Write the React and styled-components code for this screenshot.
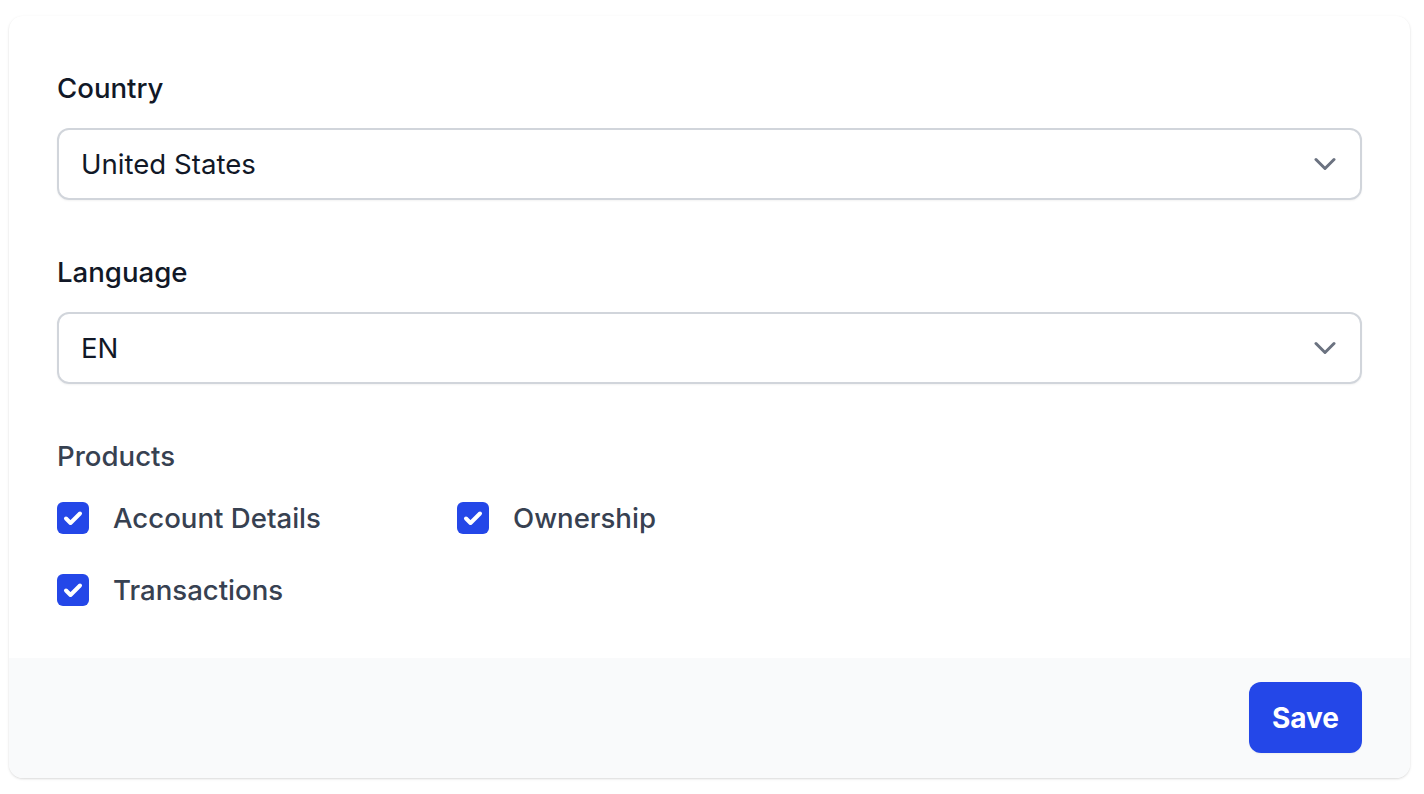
import styled, { createGlobalStyle } from 'styled-components';

const GlobalStyle = createGlobalStyle`
  html, body {
    margin: 0;
    padding: 0;
    background: #ffffff;
    font-family: Inter, "Noto Sans", "Liberation Sans", sans-serif;
    -webkit-font-smoothing: antialiased;
  }
  * { box-sizing: border-box; }
`;

const Page = styled.div`
  padding: 16px 14px 16px 9px;
`;

const Card = styled.form`
  background: #ffffff;
  border-radius: 14px;
  box-shadow: 0 1px 3px rgba(0, 0, 0, 0.1), 0 1px 2px rgba(0, 0, 0, 0.06);
  overflow: hidden;
`;

const Body = styled.div`
  padding: 48px 48px;
  display: flex;
  flex-direction: column;
  gap: 48px;
`;

const Field = styled.div`
  display: flex;
  flex-direction: column;
  gap: 16px;
`;

const Label = styled.label`
  font-size: 27.6px;
  line-height: 48px;
  font-weight: 500;
  color: ${p => (p.$muted ? '#374151' : '#111827')};
`;

const SelectBox = styled.div`
  position: relative;
  height: 72px;
  border: 2px solid #d1d5db;
  border-radius: 12px;
  box-shadow: 0 1px 2px rgba(0, 0, 0, 0.05);
  display: flex;
  align-items: center;
  padding: 0 22px;
  font-size: 27.6px;
  color: #111827;
`;

const Chevron = styled.svg`
  position: absolute;
  right: 24px;
  top: 50%;
  transform: translateY(-50%);
`;

const Options = styled.div`
  display: grid;
  grid-template-columns: repeat(2, 400px);
  row-gap: 32px;
  margin-top: 18px;
`;

const Option = styled.label`
  display: flex;
  align-items: center;
  gap: 24px;
  height: 40px;
  font-size: 27.6px;
  font-weight: 500;
  color: #374151;
`;

const Box = styled.span`
  width: 32px;
  height: 32px;
  border-radius: 6px;
  background: #2447e8;
  display: flex;
  align-items: center;
  justify-content: center;
`;

const Footer = styled.div`
  background: #f9fafb;
  padding: 24px 48px 25px;
  display: flex;
  justify-content: flex-end;
`;

const SaveButton = styled.button`
  border: none;
  background: #2447e8;
  color: #ffffff;
  font-family: inherit;
  font-size: 28px;
  font-weight: 700;
  line-height: 40px;
  padding: 16px 23px 15px;
  border-radius: 12px;
  box-shadow: 0 1px 2px rgba(0, 0, 0, 0.05);
  cursor: pointer;
`;

function Select({ value }) {
  return (
    <SelectBox>
      {value}
      <Chevron width="22" height="13" viewBox="0 0 22 13" fill="none">
        <path d="M2 2l9 9 9-9" stroke="#6b7280" strokeWidth="3" strokeLinecap="round" strokeLinejoin="round" />
      </Chevron>
    </SelectBox>
  );
}

function Check({ children }) {
  return (
    <Option>
      <Box>
        <svg width="32" height="32" viewBox="0 0 32 32" fill="none">
          <path d="M9 16.5l4.5 4.5L23 11.5" stroke="#ffffff" strokeWidth="4" strokeLinecap="round" strokeLinejoin="round" />
        </svg>
      </Box>
      {children}
    </Option>
  );
}

export default function App() {
  return (
    <>
      <GlobalStyle />
      <Page>
        <Card onSubmit={e => e.preventDefault()}>
          <Body>
            <Field>
              <Label>Country</Label>
              <Select value="United States" />
            </Field>
            <Field>
              <Label>Language</Label>
              <Select value="EN" />
            </Field>
            <div>
              <Label $muted as="div">Products</Label>
              <Options>
                <Check>Account Details</Check>
                <Check>Ownership</Check>
                <Check>Transactions</Check>
              </Options>
            </div>
          </Body>
          <Footer>
            <SaveButton type="submit">Save</SaveButton>
          </Footer>
        </Card>
      </Page>
    </>
  );
}
